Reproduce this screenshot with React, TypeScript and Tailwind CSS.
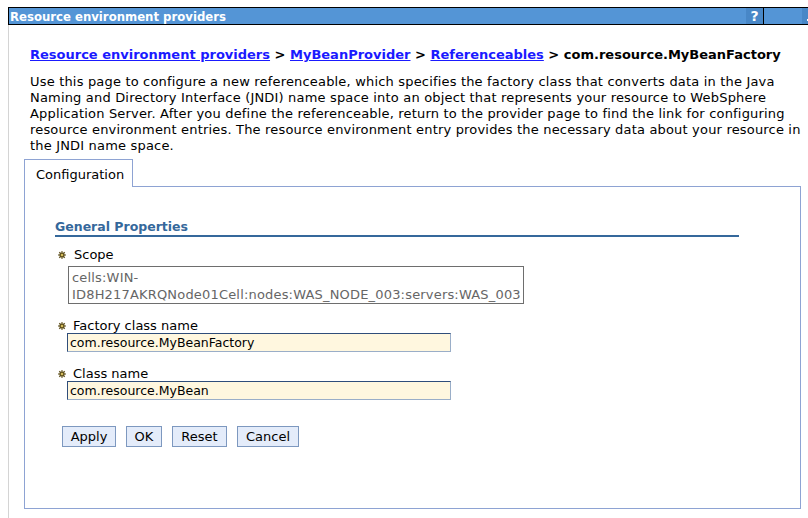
import React from "react";

function Req() {
  return (
    <svg width="8" height="8" viewBox="0 0 8 8" className="shrink-0">
      <path d="M4 0.3V7.7M0.3 4H7.7M1.3 1.3L6.7 6.7M6.7 1.3L1.3 6.7" stroke="#5e4f1a" strokeWidth="1.4" />
      <circle cx="4" cy="4" r="1.2" fill="#d8c060" />
    </svg>
  );
}

function Btn({ label, w }: { label: string; w: string }) {
  return (
    <button
      className={`${w} h-[21px] border border-[#7d98bf] bg-[#e4ecfa] text-[13px] leading-[19px] text-black text-center font-['DejaVu_Sans',sans-serif] p-0`}
    >
      {label}
    </button>
  );
}

export default function App() {
  return (
    <div className="w-[808px] h-[518px] bg-white overflow-hidden">
      <div className="pt-[7px] pl-[8px]">
        {/* Title bar */}
        <div className="w-[812px] h-[18px] border border-black bg-[#5495d6] flex items-stretch">
          <div className="w-[737px] flex items-center pl-[1px]">
            <span className="text-white font-bold text-[13px] leading-none font-['DejaVu_Sans_Condensed','DejaVu_Sans',sans-serif] [font-stretch:condensed]">
              Resource environment providers
            </span>
          </div>
          <div className="w-[17px] bg-[#4887c7] flex items-center justify-center text-white font-bold text-[14px] leading-none font-['DejaVu_Sans',sans-serif]">
            ?
          </div>
          <div className="w-[1px] bg-black" />
          <div className="w-[38px]" />
          <div className="w-[16px] bg-[#4887c7] flex items-end justify-center pb-[3px]">
            <div className="w-[6px] h-[2px] bg-white" />
          </div>
        </div>

        {/* Body */}
        <div className="border-l border-[#d4d4d4] h-[494px]">
          <div className="pl-[21px] pt-[22px]">
            <div className="text-[13px] leading-[16px] font-bold font-['DejaVu_Sans',sans-serif] whitespace-nowrap text-black">
              <a className="text-[#1a1aff] underline" href="#">Resource environment providers</a>
              {" > "}
              <a className="text-[#1a1aff] underline" href="#">MyBeanProvider</a>
              {" > "}
              <a className="text-[#1a1aff] underline" href="#">Referenceables</a>
              {" > com.resource.MyBeanFactory"}
            </div>
            <p className="mt-[11px] text-[13px] leading-[16px] tracking-[0.18px] text-black whitespace-nowrap font-['DejaVu_Sans',sans-serif]">
              Use this page to configure a new referenceable, which specifies the factory class that converts data in the Java
              <br />
              Naming and Directory Interface (JNDI) name space into an object that represents your resource to WebSphere
              <br />
              Application Server. After you define the referenceable, return to the provider page to find the link for configuring
              <br />
              resource environment entries. The resource environment entry provides the necessary data about your resource in
              <br />
              the JNDI name space.
            </p>
          </div>

          {/* Tabs */}
          <div className="ml-[15px] mt-[5px] w-[777px]">
            <div className="flex">
              <div className="w-[109px] h-[28px] border-x border-t border-[#8ea3d3] pl-[11px] pt-[7px] text-[13px] leading-[16px] text-black font-['DejaVu_Sans',sans-serif]">
                Configuration
              </div>
              <div className="flex-1 h-[28px] border-b border-[#8ea3d3]" />
            </div>
            <div className="h-[322px] border-x border-b border-[#8ea3d3] pl-[30px] pt-[31px] font-['DejaVu_Sans',sans-serif] text-[13px]">
              <div className="w-[684px] border-b-2 border-[#35689b] text-[12.5px] leading-[16px] pt-[1px] font-bold text-[#35689b]">
                General Properties
              </div>

              {/* Scope */}
              <div className="mt-[10px] flex items-center h-[16px]">
                <div className="ml-[3px]">
                  <Req />
                </div>
                <span className="ml-[8px] leading-[16px] text-black">Scope</span>
              </div>
              <div className="ml-[13px] mt-[3px] w-[456px] h-[38px] border border-[#6e6e6e] pl-[3px] pt-[2px] text-[#666666] leading-[17px] tracking-[0.18px] whitespace-nowrap overflow-hidden">
                cells:WIN-
                <br />
                ID8H217AKRQNode01Cell:nodes:WAS_NODE_003:servers:WAS_003
              </div>

              {/* Factory class name */}
              <div className="mt-[14px] flex items-center h-[15px]">
                <div className="ml-[3px]">
                  <Req />
                </div>
                <span className="ml-[7px] leading-[15px] text-black">Factory class name</span>
              </div>
              <div className="ml-[12px] w-[384px] h-[19px] border border-t-[#2f4d7a] border-l-[#2f4d7a] border-r-[#9aaec8] border-b-[#9aaec8] bg-[#fff7df] pl-[2px] flex items-center text-black text-[12.5px] leading-[17px]">
                com.resource.MyBeanFactory
              </div>

              {/* Class name */}
              <div className="mt-[14px] flex items-center h-[15px]">
                <div className="ml-[3px]">
                  <Req />
                </div>
                <span className="ml-[7px] leading-[15px] text-black">Class name</span>
              </div>
              <div className="ml-[12px] w-[384px] h-[19px] border border-t-[#2f4d7a] border-l-[#2f4d7a] border-r-[#9aaec8] border-b-[#9aaec8] bg-[#fff7df] pl-[2px] flex items-center text-black text-[12.5px] leading-[17px]">
                com.resource.MyBean
              </div>

              {/* Buttons */}
              <div className="mt-[26px] ml-[7px] flex gap-[10px]">
                <Btn label="Apply" w="w-[54px]" />
                <Btn label="OK" w="w-[36px]" />
                <Btn label="Reset" w="w-[55px]" />
                <Btn label="Cancel" w="w-[62px]" />
              </div>
            </div>
          </div>
        </div>
      </div>
    </div>
  );
}
